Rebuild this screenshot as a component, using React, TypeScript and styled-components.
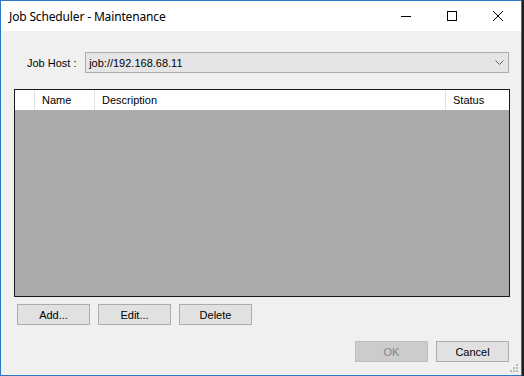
import styled, { createGlobalStyle } from 'styled-components';

const GlobalStyle = createGlobalStyle`
  html, body {
    margin: 0;
    padding: 0;
    background: #1f1f1f;
  }
  body {
    font-family: "Liberation Sans", Arial, sans-serif;
    font-size: 11px;
  }
`;

const Screen = styled.div`
  width: 524px;
  height: 376px;
  display: flex;
  background: #1f1f1f;
`;

const Window = styled.div`
  width: 520px;
  height: 374px;
  border: 1px solid #2b78c8;
  display: flex;
  flex-direction: column;
  background: #f0f0f0;
`;

const TitleBar = styled.div`
  height: 30px;
  background: #ffffff;
  display: flex;
  align-items: center;
  padding-left: 8px;
`;

const Title = styled.span`
  flex: 1;
  font-family: "Noto Sans", "Open Sans", sans-serif;
  font-size: 12px;
  color: #000;
  letter-spacing: -0.15px;
`;

const CaptionButton = styled.div`
  width: 46px;
  height: 30px;
  display: flex;
  align-items: center;
  justify-content: center;
`;

const Body = styled.div`
  flex: 1;
  display: flex;
  flex-direction: column;
  padding: 21px 12px 0 13px;
`;

const HostRow = styled.div`
  display: flex;
  align-items: center;
  padding-left: 13px;
`;

const Label = styled.span`
  width: 59px;
  color: #000;
`;

const Combo = styled.div`
  width: 421px;
  height: 19px;
  border: 1px solid #acacac;
  background: #e5e5e5;
  display: flex;
  align-items: center;
  padding-left: 3px;
  padding-right: 4px;
  box-sizing: content-box;
`;

const ComboText = styled.span`
  flex: 1;
  color: #000;
`;

const Grid = styled.div`
  margin-top: 16px;
  width: 494px;
  height: 206px;
  border: 1px solid #1a1a1a;
  background: #ababab;
  display: flex;
  flex-direction: column;
`;

const HeaderRow = styled.div`
  height: 20px;
  background: #ffffff;
  display: flex;
`;

const HeaderCell = styled.div<{ $w?: number; $last?: boolean }>`
  width: ${p => (p.$w ? `${p.$w}px` : 'auto')};
  flex: ${p => (p.$w ? 'none' : 1)};
  border-right: ${p => (p.$last ? 'none' : '1px solid #e3e3e3')};
  display: flex;
  align-items: center;
  padding-left: 7px;
  box-sizing: border-box;
  color: #000;
`;

const ButtonRow = styled.div<{ $end?: boolean }>`
  display: flex;
  gap: 8px;
  justify-content: ${p => (p.$end ? 'flex-end' : 'flex-start')};
  padding-left: ${p => (p.$end ? '0' : '3px')};
  margin-top: ${p => (p.$end ? '16px' : '7px')};
`;

const Button = styled.button<{ $disabled?: boolean }>`
  width: 73px;
  height: 21px;
  margin: 0;
  padding: 0;
  font-family: "Liberation Sans", Arial, sans-serif;
  font-size: 11px;
  background: ${p => (p.$disabled ? '#cccccc' : '#e1e1e1')};
  border: 1px solid ${p => (p.$disabled ? '#bfbfbf' : '#adadad')};
  color: ${p => (p.$disabled ? '#838383' : '#000')};
`;

const Footer = styled.div`
  flex: 1;
  display: flex;
  align-items: flex-end;
  justify-content: flex-end;
  margin-right: -10px;
  padding: 0 0 2px 0;
`;

const Grip = () => (
  <svg width="10" height="10" viewBox="0 0 10 10">
    {[
      [7, 1],
      [4, 4],
      [7, 4],
      [1, 7],
      [4, 7],
      [7, 7],
    ].map(([x, y]) => (
      <rect key={`${x}-${y}`} x={x} y={y} width="2" height="2" fill="#b8b8b8" />
    ))}
  </svg>
);

export default function App() {
  return (
    <Screen>
      <GlobalStyle />
      <Window>
        <TitleBar>
          <Title>Job Scheduler - Maintenance</Title>
          <CaptionButton>
            <svg width="10" height="10" viewBox="0 0 10 10">
              <line x1="0" y1="5.5" x2="10" y2="5.5" stroke="#000" strokeWidth="1" />
            </svg>
          </CaptionButton>
          <CaptionButton>
            <svg width="10" height="10" viewBox="0 0 10 10">
              <rect x="0.5" y="0.5" width="9" height="9" fill="none" stroke="#000" strokeWidth="1" />
            </svg>
          </CaptionButton>
          <CaptionButton>
            <svg width="10" height="10" viewBox="0 0 10 10">
              <path d="M0 0 L10 10 M10 0 L0 10" stroke="#000" strokeWidth="1" />
            </svg>
          </CaptionButton>
        </TitleBar>
        <Body>
          <HostRow>
            <Label>Job Host :</Label>
            <Combo>
              <ComboText>job://192.168.68.11</ComboText>
              <svg width="9" height="5" viewBox="0 0 9 5">
                <path d="M0.5 0.5 L4.5 4.5 L8.5 0.5" fill="none" stroke="#606060" strokeWidth="1" />
              </svg>
            </Combo>
          </HostRow>
          <Grid>
            <HeaderRow>
              <HeaderCell $w={20} />
              <HeaderCell $w={60}>Name</HeaderCell>
              <HeaderCell>Description</HeaderCell>
              <HeaderCell $w={63} $last>Status</HeaderCell>
            </HeaderRow>
          </Grid>
          <ButtonRow>
            <Button>Add...</Button>
            <Button>Edit...</Button>
            <Button>Delete</Button>
          </ButtonRow>
          <ButtonRow $end>
            <Button $disabled disabled>OK</Button>
            <Button>Cancel</Button>
          </ButtonRow>
          <Footer>
            <Grip />
          </Footer>
        </Body>
      </Window>
    </Screen>
  );
}
